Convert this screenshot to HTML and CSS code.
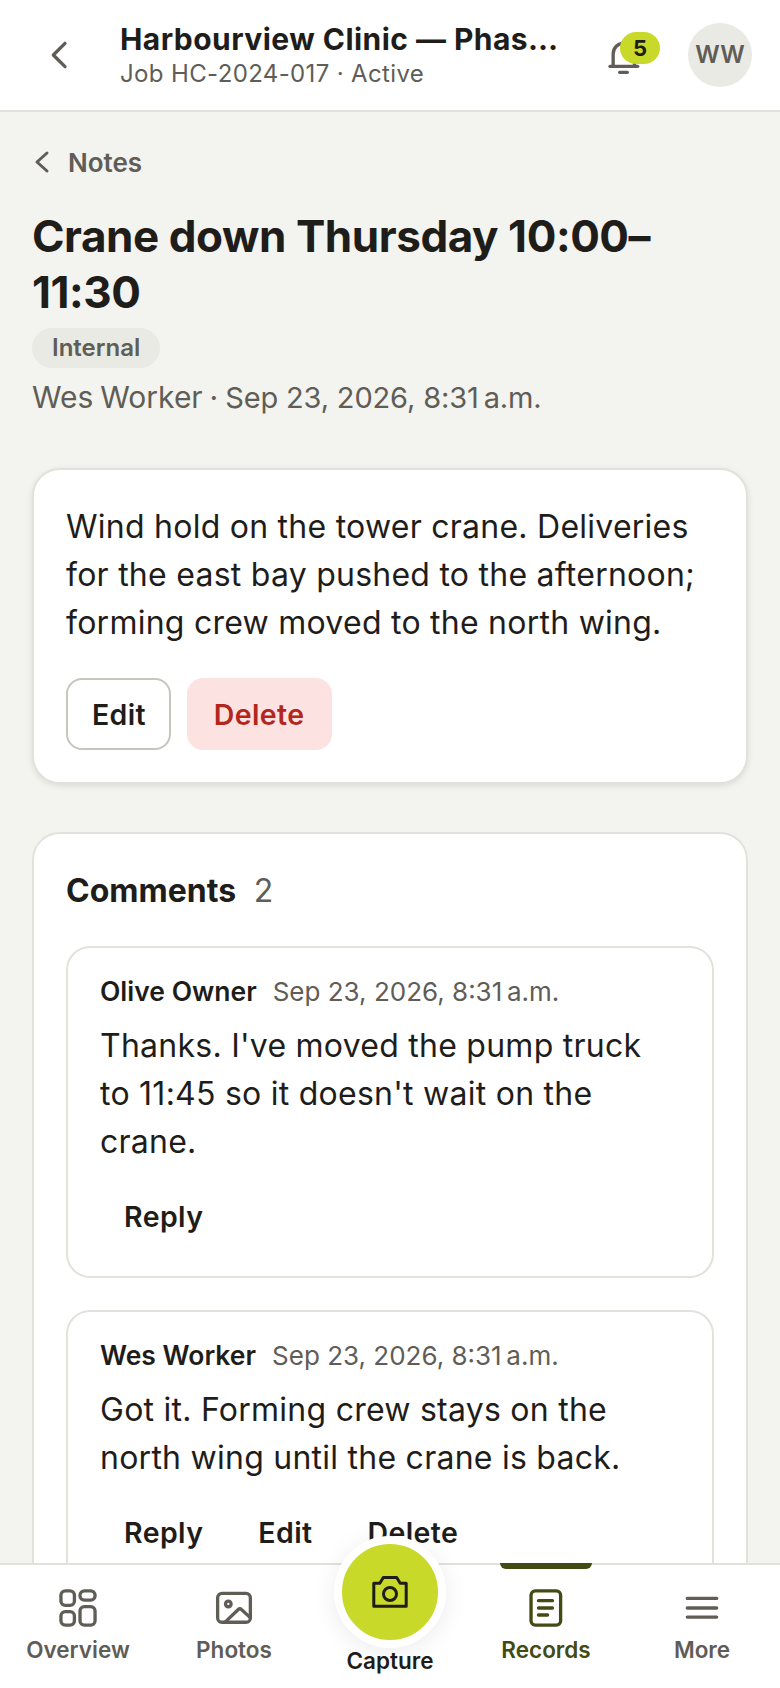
FILE: index.html
```html
<!DOCTYPE html>
<html lang="en">
<head>
  <meta charset="UTF-8">
  <meta name="viewport" content="width=device-width, initial-scale=1.0">
  <title>Crane down Thursday - Harbourview Clinic</title>
  <link rel="stylesheet" href="styles.css">
</head>
<body>

  <header class="top-bar">
    <button class="back-btn" aria-label="Back">
      <svg viewBox="0 0 24 24" width="40" height="40"><path d="M15 5l-7 7 7 7" /></svg>
    </button>
    <div class="job-info">
      <div class="job-title">Harbourview Clinic — Phase 2 Tower</div>
      <div class="job-sub">Job HC-2024-017 · Active</div>
    </div>
    <div class="bell">
      <svg viewBox="0 0 24 24" width="40" height="40"><path d="M4.9 17V9.5a6.4 6.4 0 0 1 12.8 0V17" /><path d="M3 17h16.6" /><path d="M8.8 20.6h4.6" /></svg>
      <span class="bell-count">5</span>
    </div>
    <div class="avatar">WW</div>
  </header>

  <main class="content">
    <a class="crumb">
      <svg class="crumb-icon" viewBox="0 0 18 26" width="18" height="26"><path d="M15 4l-10 9 10 9" /></svg>
      Notes
    </a>
    <h1 class="note-title">Crane down Thursday 10:00–11:30</h1>
    <span class="tag">Internal</span>
    <p class="note-meta">Wes Worker · <span class="note-date">Sep 23, 2026, 8:31&#8239;a.m.</span></p>

    <section class="card note-card">
      <p class="note-body">Wind hold on the tower crane. Deliveries for the east bay pushed to the afternoon; forming crew moved to the north wing.</p>
      <div class="note-actions">
        <button class="btn btn-edit">Edit</button>
        <button class="btn btn-delete">Delete</button>
      </div>
    </section>

    <section class="card comments-card">
      <h2 class="comments-head">Comments <span class="comments-count">2</span></h2>

      <article class="comment">
        <div class="comment-head"><strong>Olive Owner</strong><span>Sep 23, 2026, 8:31&#8239;a.m.</span></div>
        <p class="comment-text">Thanks. I've moved the pump truck to 11:45 so it doesn't wait on the crane.</p>
        <div class="comment-actions"><button>Reply</button></div>
      </article>

      <article class="comment">
        <div class="comment-head"><strong>Wes Worker</strong><span>Sep 23, 2026, 8:31&#8239;a.m.</span></div>
        <p class="comment-text">Got it. Forming crew stays on the north wing until the crane is back.</p>
        <div class="comment-actions"><button>Reply</button><button>Edit</button><button>Delete</button></div>
      </article>
    </section>
  </main>

  <nav class="tab-bar">
    <a class="tab">
      <svg class="icon-bold" viewBox="0 0 24 24" width="42" height="42"><rect x="2.25" y="2.25" width="7.7" height="8.25" rx="2.5" /><rect x="13.15" y="2.25" width="8.6" height="5.2" rx="2.5" /><rect x="13.15" y="11.25" width="8.6" height="10.5" rx="2.5" /><rect x="2.25" y="14.05" width="7.7" height="7.7" rx="2.5" /></svg>
      Overview
    </a>
    <a class="tab">
      <svg class="icon-bold" viewBox="0 0 24 24" width="42" height="42"><rect x="2.65" y="3.65" width="18.7" height="16.5" rx="2.5" /><circle cx="8.75" cy="9.7" r="1.6" /><path d="M6.9 20.1l7.4-7.1a1.5 1.5 0 0 1 2.1 0l4.9 4.5" /></svg>
      Photos
    </a>
    <a class="tab tab-capture">
      <span class="capture-btn">
        <svg viewBox="0 0 40 40" width="40" height="40"><path d="M3.8 11.3h6l3.5-5.8h13.4l3.5 5.8h6v22.9H3.8z" /><circle cx="20" cy="22" r="6.5" /></svg>
      </span>
      Capture
    </a>
    <a class="tab tab-active">
      <svg class="icon-bold" viewBox="0 0 24 24" width="42" height="42"><rect x="3.45" y="2.25" width="16.9" height="19.5" rx="2.5" /><path d="M7.7 7.8h8M7.7 12h8M7.7 16h5.2" /></svg>
      Records
    </a>
    <a class="tab">
      <svg class="icon-bold" viewBox="0 0 24 24" width="42" height="42"><path d="M3.6 6.5h16.8M3.6 12h16.8M3.6 17.2h16.8" /></svg>
      More
    </a>
  </nav>

</body>
</html>
```

FILE: styles.css
```css
/* Global */
* {
  box-sizing: border-box;
}

body {
  margin: 0;
  height: 1688px;
  overflow: hidden;
  display: flex;
  flex-direction: column;
  font-family: 'Inter', sans-serif;
  color: #1f1d1a;
  background-color: #f3f3ef;
}

p, h1, h2 {
  margin: 0;
}

button {
  font-family: inherit;
  background: none;
  border: none;
  padding: 0;
  color: inherit;
}

svg {
  display: block;
  fill: none;
  stroke: currentColor;
  stroke-width: 2;
  stroke-linecap: round;
  stroke-linejoin: round;
}

/* Top bar */
.top-bar {
  flex: none;
  height: 112px;
  display: flex;
  align-items: center;
  padding: 0 28px 0 40px;
  background-color: #fff;
  border-bottom: 2px solid #e2e2dc;
}

.back-btn {
  color: #5f5d56;
  width: 40px;
  margin-right: 40px;
}

.job-info {
  width: 440px;
}

.job-title {
  font-size: 30px;
  line-height: 36px;
  font-weight: 700;
  letter-spacing: 0.45px;
  white-space: nowrap;
  overflow: hidden;
  text-overflow: ellipsis;
}

.job-sub {
  margin-top: 2px;
  font-size: 24px;
  line-height: 30px;
  letter-spacing: 0.36px;
  color: #5f5d56;
}

.bell {
  position: relative;
  width: 40px;
  margin: 6px 0 0 45px;
  color: #5f5d56;
}

.bell-count {
  position: absolute;
  top: -6px;
  left: 15px;
  width: 40px;
  height: 32px;
  border-radius: 16px;
  background-color: #c9d92a;
  color: #1f1d1a;
  font-size: 22px;
  font-weight: 700;
  line-height: 32px;
  text-align: center;
}

.avatar {
  width: 64px;
  height: 64px;
  margin-left: 43px;
  border-radius: 50%;
  background-color: #e9eae4;
  color: #5f5d56;
  font-size: 24px;
  font-weight: 600;
  line-height: 64px;
  text-align: center;
}

/* Page content */
.content {
  flex: 1;
  min-height: 0;
  overflow: hidden;
  padding: 34px 32px 0;
}

.crumb {
  display: flex;
  align-items: center;
  gap: 18px;
  height: 32px;
  font-size: 26px;
  font-weight: 600;
  color: #5f5d56;
}

.crumb-icon {
  stroke-width: 3;
}

.note-title {
  margin-top: 30px;
  font-size: 44px;
  line-height: 56px;
  font-weight: 700;
  letter-spacing: -0.44px;
}

.tag {
  display: inline-block;
  margin-top: 8px;
  padding: 0 20px;
  height: 40px;
  border-radius: 20px;
  background-color: #e9eae4;
  color: #5f5d56;
  font-size: 24px;
  font-weight: 600;
  line-height: 40px;
}

.note-meta {
  margin-top: 7px;
  font-size: 30px;
  line-height: 44px;
  word-spacing: -1.5px;
  color: #5f5d56;
}

.note-date {
  font-size: 29px;
  letter-spacing: -0.15px;
  word-spacing: 0;
}

/* Cards */
.card {
  background-color: #fff;
  border: 2px solid #e2e2dc;
  border-radius: 28px;
  padding: 32px;
}

.note-card {
  margin-top: 48px;
  box-shadow: 0 2px 6px rgba(0, 0, 0, 0.1);
}

.note-body {
  font-size: 32px;
  line-height: 48px;
  letter-spacing: 0.25px;
  margin-top: 1px;
}

.note-actions {
  display: flex;
  gap: 16px;
  margin-top: 31px;
}

.btn {
  height: 72px;
  padding: 0 24px;
  border: 2px solid transparent;
  border-radius: 16px;
  font-size: 28.5px;
  letter-spacing: 0.4px;
  font-weight: 600;
}

.btn-edit {
  padding: 0 23px 0 24px;
  letter-spacing: 0.3px;
  border-color: #c6c6bf;
}

.btn-delete {
  padding: 0 25px;
  background-color: #fce3e2;
  color: #b3261e;
}

.comments-card {
  margin-top: 48px;
}

.comments-head {
  margin-top: 5px;
  font-size: 32px;
  line-height: 40px;
  font-weight: 700;
}

.comments-count {
  margin-left: 10px;
  font-weight: 400;
  color: #5f5d56;
}

/* Comments */
.comment {
  margin-top: 35px;
  padding: 25px 32px 28px;
  border: 2px solid #e2e2dc;
  border-radius: 24px;
}

.comment + .comment {
  margin-top: 32px;
}

.comment-head {
  display: flex;
  align-items: baseline;
  gap: 16px;
  font-size: 26px;
  line-height: 36px;
  color: #5f5d56;
}

.comment-head strong {
  font-size: 26.5px;
  font-weight: 600;
  color: #1f1d1a;
}

.comment-text {
  margin-top: 12px;
  font-size: 32px;
  line-height: 48px;
  letter-spacing: 0.25px;
}

.comment-actions {
  display: flex;
  gap: 7px;
  margin-top: 18px;
}

.comment-actions button {
  height: 64px;
  padding: 0 24px;
  font-size: 28.5px;
  letter-spacing: 0.4px;
  font-weight: 600;
}

/* Bottom nav */
.tab-bar {
  flex: none;
  position: relative;
  height: 125px;
  display: grid;
  grid-template-columns: repeat(5, 1fr);
  background-color: #fff;
  border-top: 2px solid #e2e2dc;
}

.tab {
  display: flex;
  flex-direction: column;
  align-items: center;
  gap: 7px;
  padding-top: 22px;
  font-size: 22.5px;
  line-height: 28px;
  font-weight: 600;
  color: #5f5d56;
}

.icon-bold {
  stroke-width: 1.9;
}

.tab-active {
  position: relative;
  color: #434a14;
}

.tab-active::before {
  content: "";
  position: absolute;
  top: -2px;
  left: 32px;
  right: 32px;
  height: 6px;
  border-radius: 0 0 6px 6px;
  background-color: #434a14;
}

.tab-capture {
  color: #1f1d1a;
  padding-top: 82px;
}

.capture-btn {
  position: absolute;
  top: -29px;
  width: 112px;
  height: 112px;
  display: flex;
  align-items: center;
  justify-content: center;
  border: 8px solid #fff;
  border-radius: 50%;
  background-color: #c9d92a;
  box-shadow: 0 4px 24px rgba(0, 0, 0, 0.08);
}

.capture-btn svg {
  stroke-width: 3;
}
```
